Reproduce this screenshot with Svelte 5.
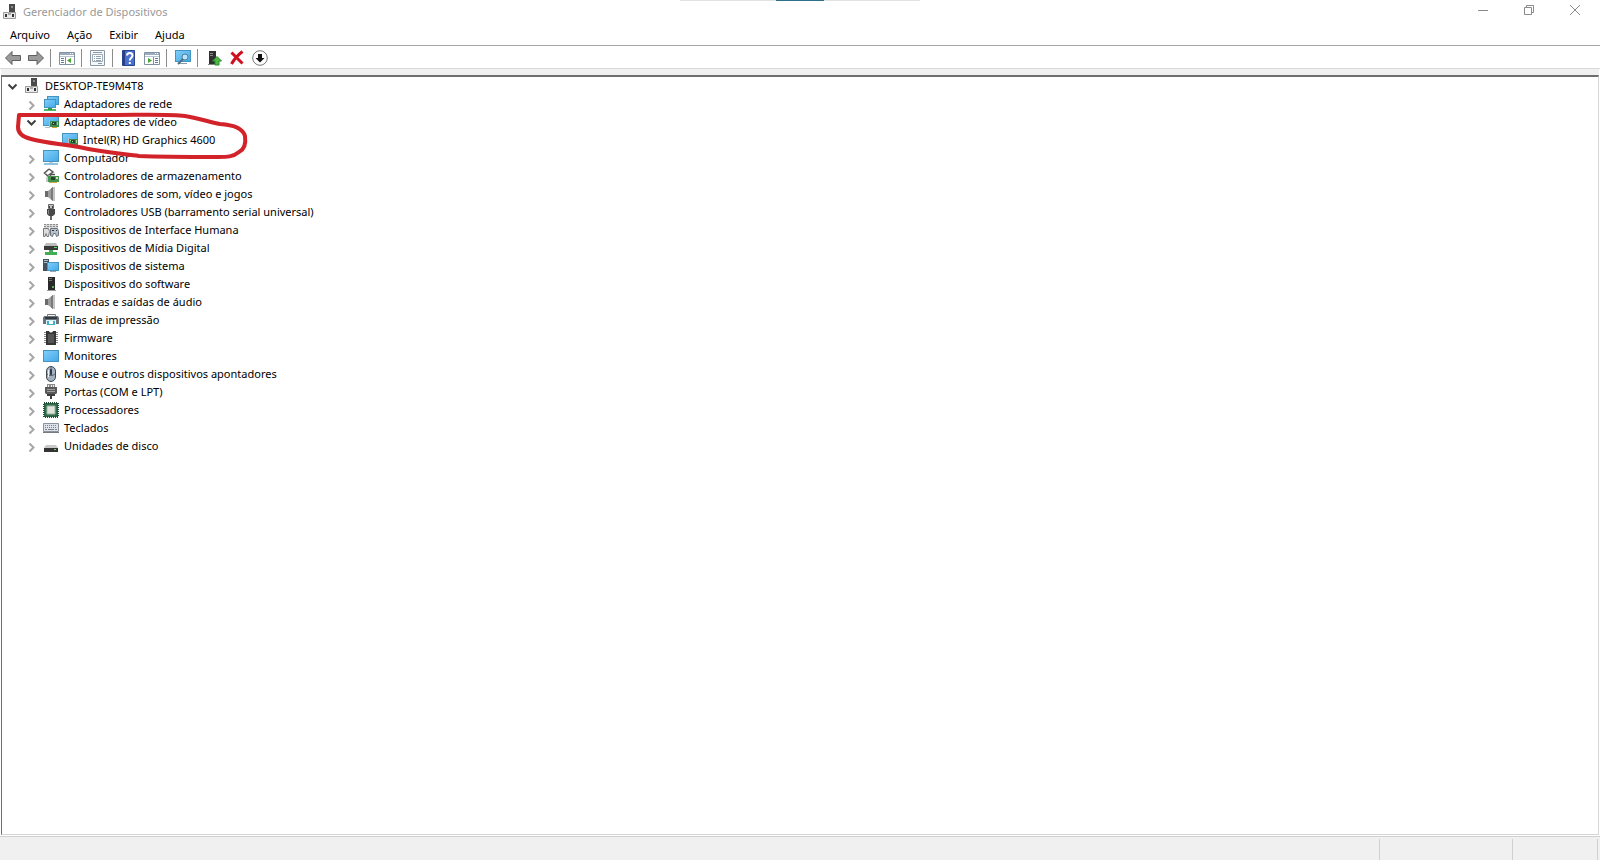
<script>
  let categories = $state([
    { label: 'Adaptadores de rede', icon: 'network' },
    {
      label: 'Adaptadores de vídeo',
      icon: 'display',
      open: true,
      devices: [{ label: 'Intel(R) HD Graphics 4600', icon: 'display' }]
    },
    { label: 'Computador', icon: 'computer' },
    { label: 'Controladores de armazenamento', icon: 'storage' },
    { label: 'Controladores de som, vídeo e jogos', icon: 'sound' },
    { label: 'Controladores USB (barramento serial universal)', icon: 'usb' },
    { label: 'Dispositivos de Interface Humana', icon: 'hid' },
    { label: 'Dispositivos de Mídia Digital', icon: 'media' },
    { label: 'Dispositivos de sistema', icon: 'system' },
    { label: 'Dispositivos do software', icon: 'software' },
    { label: 'Entradas e saídas de áudio', icon: 'sound' },
    { label: 'Filas de impressão', icon: 'printer' },
    { label: 'Firmware', icon: 'firmware' },
    { label: 'Monitores', icon: 'monitor' },
    { label: 'Mouse e outros dispositivos apontadores', icon: 'mouse' },
    { label: 'Portas (COM e LPT)', icon: 'port' },
    { label: 'Processadores', icon: 'cpu' },
    { label: 'Teclados', icon: 'keyboard' },
    { label: 'Unidades de disco', icon: 'disk' }
  ]);
  let rootOpen = $state(true);

  const menus = ['Arquivo', 'Ação', 'Exibir', 'Ajuda'];

  // null draws a separator
  const tools = [
    { icon: 'back', title: 'Voltar' },
    { icon: 'forward', title: 'Avançar' },
    null,
    { icon: 'console', title: 'Mostrar/ocultar árvore de console' },
    null,
    { icon: 'properties', title: 'Propriedades' },
    null,
    { icon: 'help', title: 'Ajuda' },
    { icon: 'actions', title: 'Mostrar/ocultar painel de ações' },
    null,
    { icon: 'scan', title: 'Verificar se há alterações de hardware' },
    null,
    { icon: 'update', title: 'Atualizar driver' },
    { icon: 'remove', title: 'Desinstalar dispositivo' },
    { icon: 'disable', title: 'Desabilitar dispositivo' }
  ];
</script>

{#snippet screen(x, y, w, h)}
  <rect {x} {y} width={w} height={h} fill="#4593bf" />
  <rect x={x + 1} y={y + 1} width={w - 2} height={h - 2} fill="url(#glass)" />
{/snippet}

{#snippet icon(name)}
  <svg class="icon" viewBox="0 0 16 16" width="16" height="16" aria-hidden="true">
    {#if name === 'root'}
      <path d="M7 0h6v8H7z" fill="#4a4a4a" />
      <path d="M9 2h2v2H9z" fill="#8a8a8a" />
      <path d="M1.500 8.500h12v6h-12z" fill="#e9e9e9" stroke="#9a9a9a" />
      <path d="M3 10h2v3H3zM10 10h2v3h-2z" fill="#333" />
      <path d="M6 8h3v3H6z" fill="#aaa" />
    {:else if name === 'network'}
      {@render screen(4, 0, 12, 9)}
      {@render screen(1, 3, 12, 9)}
      <path d="M5 12h4v1h4v2H1v-2h4z" fill="#55b868" />
      <path d="M5 12h4v2H5z" fill="#2c9a45" />
    {:else if name === 'display'}
      {@render screen(0, 1, 16, 11)}
      <path d="M2 13h5v1H2z" fill="#a8c4d2" />
      <path d="M7 7h9v6H7z" fill="#3f8a50" />
      <path d="M9 8h4v3H9z" fill="#23452e" />
      <path d="M14 8h1v3h-1zM8 8h1v1H8zM10 9h1v1h-1z" fill="#a8d894" />
      <path d="M9 13h5v1H9z" fill="#d3a52d" />
      <path d="M6 6h1v8H6z" fill="#b9b9b9" />
    {:else if name === 'computer'}
      {@render screen(0, 0, 16, 12)}
      <path d="M6 12h4v1H6z" fill="#ccc" />
      <path d="M1 13h14v2H1z" fill="#8cc3df" />
    {:else if name === 'storage'}
      <path d="M6 1 1.500 5 6 9l2-1.500M6 1l4 3-3.500 2.500H12" fill="none" stroke="#555" stroke-width="1.500" />
      <path d="M5 8h11v6H5z" fill="#46924f" />
      <path d="M8 9h4v3H8z" fill="#24472c" />
      <path d="M13 9h2v2h-2z" fill="#c3e5b0" />
      <path d="M6 14h8v1H6z" fill="#c8ac48" />
      <path d="M3 9h2v5H3z" fill="#c9c9c9" />
    {:else if name === 'sound'}
      <path d="M2 5h3v6H2z" fill="#6a6a6a" />
      <path d="M5 5l5-4v14l-5-4z" fill="#9d9d9d" />
      <path d="M8 2.600 10 1v14l-2-1.600z" fill="#7b7b7b" />
      <path d="M10 1h2v14h-2z" fill="#c4c4c4" />
    {:else if name === 'usb'}
      <path d="M5.500.5h5v4h-5z" fill="#c2c2c2" stroke="#686868" />
      <path d="M6 2h1v2H6zM9 2h1v2H9z" fill="#444" />
      <path d="M4 5h8v5l-2 2H6l-2-2z" fill="#484848" />
      <path d="M5 6h1v4H5z" fill="#888" />
      <path d="M7 12h2v4H7z" fill="#666" />
    {:else if name === 'hid'}
      <path d="M1 2h14v4H1z" fill="#d9d9d9" />
      <path d="M1 2.500h14M1 4.500h14" stroke="#8a8a8a" stroke-dasharray="2 1" />
      <path d="M.5 6.500h5l1 3-1 5H4l-1-3-1 3H.5z" fill="#ddd" stroke="#777" />
      <path d="M7.500 6.500h7l1 3v4l-2 1-1-3h-2l-1 3-2-1z" fill="#b7c0c8" stroke="#68737e" />
      <path d="M9 8h2v1H9zM13 8h1v1h-1z" fill="#333" />
    {:else if name === 'media'}
      <path d="M3 3h10l2 3H1z" fill="#bdbdbd" />
      <path d="M1 6h14v4H1z" fill="#3a3a3a" />
      <path d="M11 7h3v1h-3z" fill="#61d86d" />
      <path d="M6 10h4v2h4v3H2v-3h4z" fill="#43ad56" />
    {:else if name === 'system'}
      <path d="M0 1h6v12H0z" fill="#41515f" />
      <path d="M1 2h4v1H1zM1 4h3v1H1z" fill="#a9bdca" />
      {@render screen(4, 4, 12, 9)}
      <path d="M7 13h6v1H7z" fill="#96a8b3" />
    {:else if name === 'software'}
      <path d="M5 1h7v13H5z" fill="#292929" />
      <path d="M6 2h3v1H6zM6 4h3v1H6z" fill="#777" />
      <path d="M9 10h2v2H9z" fill="#61ac63" />
      <path d="M4 14h9v1H4z" fill="#999" />
    {:else if name === 'printer'}
      <path d="M4.500 2.500h8v3h-8z" fill="#f7f7f7" stroke="#777" />
      <path d="M1 4h14l1 2v6H0V6z" fill="#6b7379" />
      <path d="M2 5h12v2H2z" fill="#303b43" />
      <path d="M3 8h10v5H3z" fill="#d5f2fa" />
      <path d="M4 9h8v4H4z" fill="#42b0cd" />
      <path d="M6 9h4v3H6z" fill="#fff" />
    {:else if name === 'firmware'}
      <path d="M1 2h14v1H1zM1 4h14v1H1zM1 6h14v1H1zM1 8h14v1H1zM1 10h14v1H1zM1 12h14v1H1z" fill="#8a8a8a" />
      <path d="M3 1h3l1 2h2l1-2h3v14H3z" fill="#353535" />
      <path d="M5 4h6v9H5z" fill="#555" />
    {:else if name === 'monitor'}
      {@render screen(0, 2, 16, 12)}
    {:else if name === 'mouse'}
      <rect x="3.500" y=".5" width="9" height="15" rx="4.500" fill="#a3b1bf" stroke="#3e4750" />
      <path d="M8 1v8M4 8c2 2 6 2 8 0" fill="none" stroke="#55616c" />
      <rect x="7" y="3" width="2" height="6" rx="1" fill="#263c50" />
      <path d="M5.500 4v7" stroke="#f2f4f6" />
    {:else if name === 'port'}
      <path d="M4 0h8v3H4z" fill="#8b8b8b" />
      <path d="M5 1h1v2H5zM8 1h1v2H8zM10 1h1v2h-1z" fill="#eee" />
      <path d="M2 3h12v6l-1 1H3L2 9z" fill="#595959" />
      <path d="M4 5h8v1H4zM4 7h8v1H4z" fill="#a0a0a0" />
      <path d="M4 10h8v2H4zM7 12h2v3H7z" fill="#3c3c3c" />
    {:else if name === 'cpu'}
      <path d="M1 1h14v14H1z" fill="#326b49" stroke="#1f5035" stroke-dasharray="1 1" stroke-width="2" />
      <path d="M4 4h8v8H4z" fill="#e2e2dc" stroke="#99b6a5" />
    {:else if name === 'keyboard'}
      <path d="M.5 3.500h15v8H.5z" fill="#dce2e8" stroke="#8b929b" />
      <path d="M2 5.500h12M2 7.500h12" stroke="#7b848f" stroke-dasharray="1 1" />
      <path d="M2 9.500h2M5 9.500h6M12 9.500h2" stroke="#7b848f" />
      <path d="M0 12h16v1H0z" fill="#747b83" />
    {:else if name === 'disk'}
      <path d="M3 7h10l2 3H1z" fill="#c9c9c9" />
      <path d="M1 10h14v4H1z" fill="#343434" />
      <path d="M11 11h2v1h-2z" fill="#67dc75" />
    {:else if name === 'back' || name === 'forward'}
      <path
        d="M.5 8 7 1.500v4h8.500v5H7v4z"
        fill="#9a9a9a"
        stroke="#5e5e5e"
        transform={name === 'forward' ? 'matrix(-1 0 0 1 16 0)' : undefined}
      />
    {:else if name === 'console' || name === 'actions'}
      <path d="M.5 2.500h15v12H.5z" fill="#fff" stroke="#8392a0" />
      <path d="M1 3h14v2H1z" fill="#9aacbd" />
      <path d="M11 3h1v1h-1zM13 3h1v1h-1z" fill="#fff" />
      <path d="M1 6h14v1H1z" fill="#b8c6d3" />
      {#if name === 'console'}
        <path d="M2 8.500h3M2 10.500h3M2 12.500h3" stroke="#5c7ea0" />
        <path d="M6.500 7v7" stroke="#8392a0" />
        <path d="M12 8v5l-4-2.500z" fill="#48a52f" />
      {:else}
        <path d="M11 8.500h3M11 10.500h3M11 12.500h3" stroke="#5c7ea0" />
        <path d="M9.500 7v7" stroke="#8392a0" />
        <path d="M4 8v5l4-2.500z" fill="#48a52f" />
      {/if}
    {:else if name === 'properties'}
      <path d="M.5.5h14v15H.5z" fill="#f5f7f9" stroke="#8b98a4" />
      <path d="M3 2.500h9M8 13.500h4" stroke="#8b9aaa" />
      <path d="M2.500 4.500h10v7h-10z" fill="#fff" stroke="#9fabb5" />
      <path d="M4 6.500h1M6 6.500h5M4 8.500h1M6 8.500h5M4 10.500h1M6 10.500h5" stroke="#8fa2b4" />
    {:else if name === 'help'}
      <path d="M1.500.5h12v15h-12z" fill="#4a71cd" stroke="#28458f" />
      <path d="M2 1h2v14H2z" fill="#2b3f83" />
      <path d="M6 5.500C6 2 11.500 2 11.500 5.500 11.500 8 8.800 7.500 8.800 10.500" fill="none" stroke="#fff" stroke-width="2" />
      <path d="M7.800 12h2v2h-2z" fill="#fff" />
    {:else if name === 'scan'}
      {@render screen(0, 0, 16, 12)}
      <path d="M3 13h9v1H3z" fill="#8b9ba5" />
      <circle cx="10" cy="7" r="3" fill="#b9e5fa" stroke="#547c96" />
      <path d="m8 9-5 5" stroke="#4f7188" stroke-width="2" />
    {:else if name === 'update'}
      <path d="M3 1h7v13H3z" fill="#303030" />
      <path d="M4 3h3v1H4zM4 5h3v1H4z" fill="#888" />
      <path d="M2 14h8v1H2z" fill="#888" />
      <path d="m11 6.500 4.500 4.500H13v4H9v-4H6.500z" fill="#4cb944" stroke="#278c2b" />
    {:else if name === 'remove'}
      <path d="m2.500 2.500 11 11m0-12c-4 3-8 7-11 12.500" fill="none" stroke="#cf1020" stroke-width="3" />
    {:else if name === 'disable'}
      <circle cx="8" cy="8" r="7.300" fill="#fff" stroke="#777" />
      <path d="M6 4h4v4h2.500L8 12.500 3.500 8H6z" fill="#111" />
    {/if}
  </svg>
{/snippet}

{#snippet chevron(open)}
  <svg class="chevron" class:open viewBox="0 0 16 16" width="16" height="16" aria-hidden="true">
    <path d={open ? 'm4.500 6.500 4 4 4-4' : 'm6.500 5.500 4 4-4 4'} />
  </svg>
{/snippet}

<!-- shared fill for every little screen -->
<svg class="defs" width="0" height="0" aria-hidden="true">
  <linearGradient id="glass" x1="0" y1="0" x2="1" y2="1">
    <stop offset="0" stop-color="#7fcdf8" />
    <stop offset="1" stop-color="#45aae9" />
  </linearGradient>
</svg>

<div class="window">
  <div class="handle"><span></span></div>

  <header class="titlebar">
    {@render icon('root')}
    <h1>Gerenciador de Dispositivos</h1>
    <div class="window-buttons">
      <button aria-label="Minimizar">
        <svg width="12" height="12" viewBox="0 0 12 12"><path d="M1 6.500h10" /></svg>
      </button>
      <button aria-label="Restaurar">
        <svg width="12" height="12" viewBox="0 0 12 12">
          <path d="M1.500 3.500h7v7h-7zM3.500 3V1.500h7v7H9" />
        </svg>
      </button>
      <button aria-label="Fechar">
        <svg width="12" height="12" viewBox="0 0 12 12"><path d="m1 1 10 10M11 1 1 11" /></svg>
      </button>
    </div>
  </header>

  <nav class="menubar">
    {#each menus as menu}
      <button>{menu}</button>
    {/each}
  </nav>

  <div class="toolbar" role="toolbar" aria-label="Ferramentas">
    {#each tools as tool}
      {#if tool}
        <button title={tool.title} aria-label={tool.title}>{@render icon(tool.icon)}</button>
      {:else}
        <span class="separator"></span>
      {/if}
    {/each}
  </div>

  <main class="tree">
    <button class="row" aria-expanded={rootOpen} onclick={() => (rootOpen = !rootOpen)}>
      {@render chevron(rootOpen)}
      {@render icon('root')}
      <span>DESKTOP-TE9M4T8</span>
    </button>
    {#if rootOpen}
      <ul>
        {#each categories as category}
          <li>
            <button
              class="row"
              aria-expanded={!!category.open}
              onclick={() => (category.open = !category.open)}
            >
              {@render chevron(category.open)}
              {@render icon(category.icon)}
              <span>{category.label}</span>
            </button>
            {#if category.open && category.devices}
              <ul>
                {#each category.devices as device}
                  <li>
                    <button class="row leaf">
                      {@render icon(device.icon)}
                      <span>{device.label}</span>
                    </button>
                  </li>
                {/each}
              </ul>
            {/if}
          </li>
        {/each}
      </ul>
    {/if}

    <!-- hand-drawn mark round the video adapter -->
    <svg class="mark" width="260" height="60" viewBox="0 0 260 60" aria-hidden="true">
      <path
        d="M17 15H110C140 15 168 14 183 16C196 18 207 22 218 24C234 25 241 29 243 36C244 43 243 49 237 52C231 57 225 57 216 57C188 57 160 57 137 56C113 53 99 52 77 47C60 44 43 43 29 39C20 37 16 33 16 27Z"
      />
    </svg>
  </main>

  <footer class="statusbar">
    <span></span>
    <span></span>
    <span></span>
  </footer>
</div>

<style>
  :global(body) {
    margin: 0;
  }

  .window {
    position: relative;
    display: flex;
    flex-direction: column;
    min-height: 100vh;
    background: #fff;
    color: #000;
    font-family: 'Noto Sans', 'Open Sans', sans-serif;
    font-size: 11px;
    line-height: 18px;
  }

  button {
    margin: 0;
    padding: 0;
    border: none;
    background: none;
    color: inherit;
    font: inherit;
  }

  svg {
    display: block;
    flex: none;
  }

  .defs {
    position: absolute;
  }

  .handle {
    position: absolute;
    top: 0;
    left: 50%;
    display: flex;
    justify-content: center;
    width: 240px;
    height: 1px;
    background: #e2e2e2;
    transform: translateX(-50%);
  }

  .handle span {
    width: 48px;
    background: #2f6f8f;
  }

  .titlebar {
    display: flex;
    align-items: center;
    height: 24px;
    padding: 0 2px;
  }

  h1 {
    flex: 1;
    margin: 0 0 0 5px;
    color: #999;
    font-size: 11px;
    font-weight: 400;
  }

  .window-buttons {
    display: flex;
    align-self: flex-start;
  }

  .window-buttons button {
    display: flex;
    align-items: center;
    justify-content: center;
    width: 46px;
    height: 20px;
  }

  .window-buttons path {
    fill: none;
    stroke: #8a8a8a;
  }

  .menubar {
    display: flex;
    align-items: center;
    gap: 1px;
    height: 21px;
    padding-left: 2px;
    border-bottom: 1px solid #a6a6a6;
  }

  .menubar button {
    padding: 0 8px;
  }

  .toolbar {
    display: flex;
    align-items: center;
    height: 20px;
    padding: 2px 1px 0;
    border-bottom: 1px solid #d9d9d9;
  }

  .toolbar button {
    display: flex;
    align-items: center;
    justify-content: center;
    width: 23px;
    height: 20px;
  }

  .separator {
    width: 1px;
    height: 18px;
    margin: 0 4px 0 3px;
    background: #8c8c8c;
  }

  .tree {
    position: relative;
    flex: 1;
    padding-left: 2px;
    border: 1px solid #d5d5d5;
    border-top: 2px solid #6e6e6e;
    border-left-color: #6e6e6e;
    box-shadow: 0 -6px #f0f0f0;
    margin: 6px 1px 1px;
  }

  ul {
    margin: 0;
    padding: 0 0 0 19px;
    list-style: none;
  }

  .row {
    display: flex;
    align-items: center;
    height: 18px;
    white-space: nowrap;
  }

  .row .icon {
    margin: 0 5px 0 4px;
  }

  .leaf {
    padding-left: 16px;
  }

  .chevron path {
    fill: none;
    stroke: #a6a6a6;
    stroke-width: 2;
  }

  .chevron.open path {
    stroke: #404040;
  }

  .mark {
    position: absolute;
    top: 23px;
    left: 0;
    pointer-events: none;
  }

  .mark path {
    fill: none;
    stroke: #d2232a;
    stroke-width: 4;
    stroke-linejoin: round;
  }

  .statusbar {
    display: flex;
    height: 23px;
    border-top: 1px solid #d0d0d0;
    background: #f0f0f0;
  }

  .statusbar span {
    width: 84px;
    margin-top: 2px;
    border-right: 1px solid #d0d0d0;
  }

  .statusbar span:first-child {
    flex: 1;
  }

  .statusbar span:nth-child(2) {
    width: 132px;
  }

  .statusbar span:last-child {
    margin-right: 2px;
  }
</style>
